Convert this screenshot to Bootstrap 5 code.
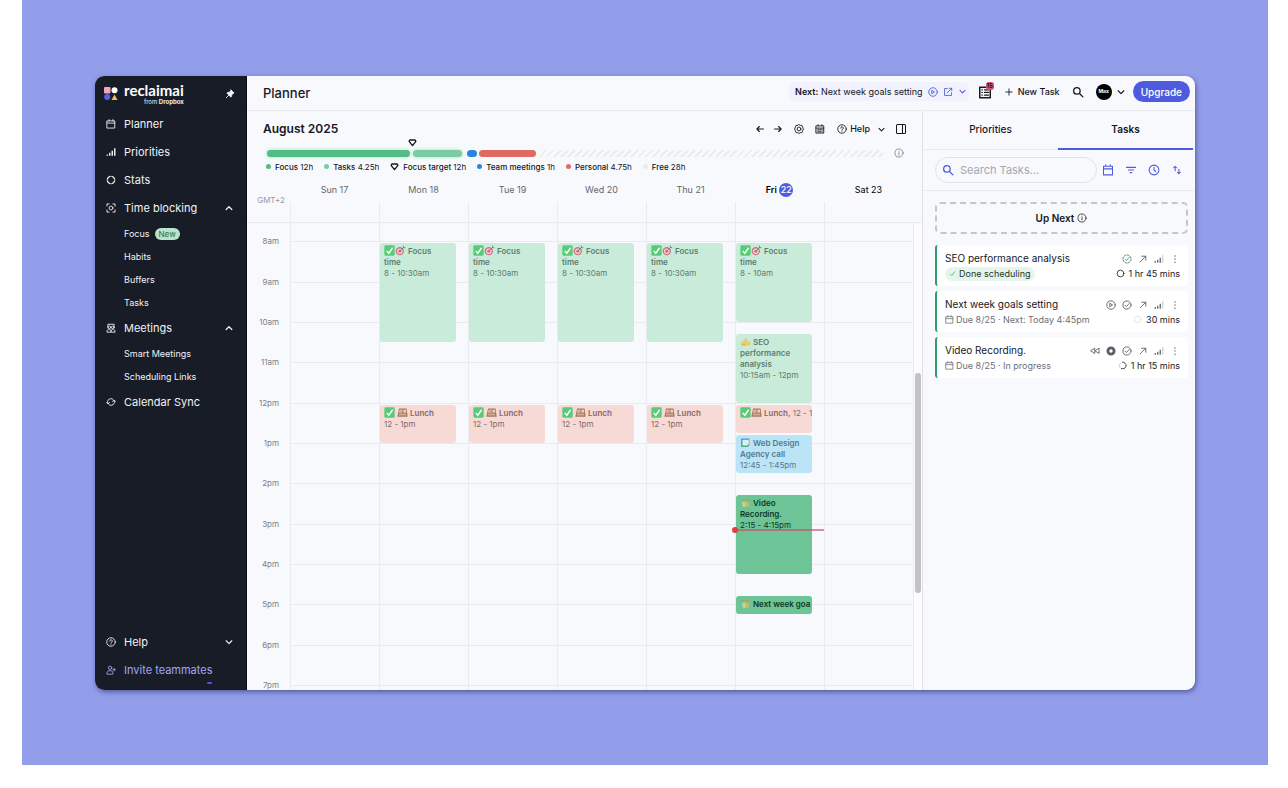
<!DOCTYPE html>
<html lang="en">
<head>
<meta charset="utf-8">
<meta name="viewport" content="width=device-width, initial-scale=1">
<title>Planner</title>
<link href="https://cdn.jsdelivr.net/npm/bootstrap@5.3.0/dist/css/bootstrap.min.css" rel="stylesheet">
<style>
:root{--ink:#15181f;--line:#e9ebf0;--accent:#4f5bde;--surface:#f8f9fd}
body{font-family:Inter,"Open Sans",sans-serif;font-size:11px;line-height:16px;color:var(--ink);background:#fff;padding:0 20px 23px 22px}
button,input{font:inherit;color:inherit}
button{background:none;border:0;padding:0}
a{color:inherit;text-decoration:none}
svg{display:block;flex:none}
.ico{width:12px;height:12px;fill:none;stroke:currentColor;stroke-width:1.4;stroke-linecap:round;stroke-linejoin:round}
.ico.xs{width:9px;height:9px}
.ico.sm{width:10px;height:10px}
.ico.lg{width:14px;height:14px}
.stage{background:#939eeb;min-height:calc(100vh - 23px);padding:76px 73px 75px}
.window{border-radius:9px;overflow:hidden;background:var(--surface);box-shadow:1px 2px 5px rgba(30,35,90,.55)}
/* sidebar */
.side{width:152px;background:#171c26;color:#f1f2f5;flex:none;padding-bottom:6px;border-right:1px solid #0b0e14}
.side-brand{height:34px;padding:2px 11px 0 9px;gap:6px}
.brand-name{font-family:Lato,sans-serif;font-weight:700;font-size:15px;line-height:15px;color:#fff}
.brand-sub{font-size:6px;line-height:7px;text-align:right}
.side-link{height:28px;padding:0 12px 0 11px;gap:8px;width:100%;text-align:left}
.side-link .ico:last-child:not(:first-child){margin-left:auto}
.side-sub{height:23px;padding-left:29px;font-size:9px;gap:5px}
.new-pill{background:#b9e3cd;color:#2d6b4d;border-radius:7px;font-size:8px;line-height:12px;padding:0 4px}
.invite{color:#a5a4f3;position:relative}
.invite::after{content:"";position:absolute;left:112px;bottom:0;width:5px;height:2px;border-radius:2px;background:#4f55d8}
/* top bar */
.topbar{height:35px;border-bottom:1px solid var(--line);padding:0 5px 3px 16px}
.top-tools{gap:12px}
.page-name{font-size:13px;font-weight:500;margin:0;line-height:18px;padding-top:2px}
.next-pill{background:#f1f2fd;border-radius:5px;height:19px;padding:0 2px 0 6px;margin-right:-3px;font-size:9px;gap:5px}
.text-9{font-size:9px}
.accent{color:var(--accent)}
.inbox{position:relative}
.inbox span{position:absolute;left:8px;top:-3px;min-width:8px;height:8px;background:#d9506a;border-radius:3px;font-size:6px;line-height:8px;font-weight:700;text-align:center}
.avatar{width:16px;height:16px;border-radius:50%;background:#000;color:#fff;font-size:5px;line-height:14px;font-weight:700;text-align:center}
.account{gap:3px}
.upgrade{background:var(--accent);color:#fff;border-radius:11px;height:21px;padding:0 8px;font-size:10px;font-weight:500}
/* planner */
.planner{border-right:1px solid #dfe1e7;min-width:0}
.month-row{height:36px;padding:0 15px 0 16px}
.month{font-size:12px;font-weight:600;margin:0}
.month-tools{gap:11px}
.help-menu{gap:3px;margin:0 -2px 0 1px}
.usage{padding:0 18px 0 20px;height:12px;gap:11px}
.usage-bar{position:relative;height:7px;min-width:0}
.seg{height:7px;border-radius:4px}
.glow{box-shadow:0 0 3px 1px #b9f0d2}
.hatch{background:repeating-linear-gradient(135deg,#eaecf0 0 2px,#f8f9fd 2px 5px)}
.marker{position:absolute;left:141px;top:-12px}
.legend{height:17px;padding:0 0 2px 19px;gap:11px;font-size:8px}
.legend b{font-weight:500}
.dot{width:5px;height:5px;border-radius:50%;flex:none}
.dot.free{background:#e9ebef}
.day-grid{display:grid;grid-template-columns:43px repeat(7,minmax(0,1fr)) 9px}
.day-head{height:47px;border-bottom:1px solid var(--line);font-size:9px;color:#63666e;text-align:center}
.day-head>div{padding-top:6px;position:relative}
.day-head>div+div::before{content:"";position:absolute;left:0;bottom:0;height:20px;border-left:1px solid var(--line)}
.day-head .tz{color:#989ba3;padding:16px 0 0 5px;font-size:8px}
.today{background:var(--accent);color:#fff;border-radius:50%;width:14px;height:14px;line-height:14px;display:inline-block;font-weight:500}
/* one grid row is two and a half minutes */
.hours{grid-template-rows:repeat(278,minmax(0,1fr));min-height:467px;flex:1;overflow:hidden;contain:size}
.day-line{grid-row:1/-1;border-left:1px solid var(--line)}
.hour-line{grid-column:2/9;height:0;border-top:1px solid var(--line)}
.hour{grid-column:1;font-size:8px;line-height:8px;color:#7b7e86;text-align:right;padding-right:11px;margin-top:-4px;height:8px}
.event{margin:2px 12px 0 1px;border-radius:3px;padding:2px 6px 0 4px;font-size:8px;line-height:11px;overflow:hidden;min-width:0;color:#5f7d6f;z-index:1}
.event b{font-weight:600}
.event svg{display:inline-block;vertical-align:-2px;width:11px;height:11px}
.ev-focus{background:#c9ebda}
.ev-lunch{background:#f7d9d6;color:#866a69}
.ev-call{background:#bbe4f7;color:#54798c}
.ev-task{background:#6cc497;color:#0d3823}
.now{grid-column:7;height:2px;background:rgba(205,80,100,.65);z-index:2;position:relative}
.now::before{content:"";position:absolute;left:-3px;top:-2px;width:6px;height:6px;border-radius:50%;background:#dc4040}
.track{grid-column:9;grid-row:1/-1;border-left:1px solid var(--line);background:#fcfcfe}
.thumb{grid-column:9;grid-row:90/221;background:#c2c2c4;border-radius:3px;margin:0 1px 0 2px}
/* task panel */
.panel{width:272px;flex:none}
.tab-row{height:39px;border-bottom:1px solid var(--line);padding-right:2px;font-size:10px;font-weight:500}
.tab-row button{flex:1;padding-bottom:2px}
.tab-row .on{border-bottom:2px solid var(--accent);font-weight:600;margin-bottom:-1px}
.search-row{height:41px;border-bottom:1px solid var(--line);padding:0 12px;gap:11px}
.search-box{border:1px solid #dfe2e8;border-radius:13px;height:26px;padding:0 6px;gap:6px;flex:1;min-width:0;margin-right:-6px}
.search-box input{border:0;background:none;outline:0;min-width:0;width:100%;padding:0}
.search-box input::placeholder{color:#a3a7b0;opacity:1}
.list-area{padding:11px 7px 0 12px}
.up-next{border:2px dashed #c4c6cc;border-radius:5px;height:32px;font-size:10px;font-weight:600;margin-bottom:11px;gap:3px}
.task{background:#fff;border-left:2px solid #2f9e6a;border-radius:3px;height:41px;padding:6px 8px 0;margin-bottom:5px;font-size:10px;line-height:15px}
.task small{font-size:9px;color:#6d7078;gap:2px}
.task .meta{font-size:9px}
.task .tools{gap:6px;color:#5b5e66}
.done{background:#e5f5ec;border-radius:7px;padding:0 5px 0 3px;gap:2px;font-size:9px;line-height:14px;color:#23352c}
</style>
</head>
<body>
<svg width="0" height="0" class="position-absolute" aria-hidden="true">
<defs>
<symbol id="cal" viewBox="0 0 16 16"><path d="M2 3h12v11.500H2zM2 6.500h12M5 1v2M11 1v2"/></symbol>
<symbol id="calf" viewBox="0 0 16 16"><path d="M2 3h12v11.500H2zM2 6.500h12M5 1v2M11 1v2"/><path d="M2.500 7h11v7h-11z" fill="currentColor" fill-opacity=".35" stroke="none"/><path d="M5 9h1M8 9h1M11 9h.5M5 12h1M8 12h1" stroke-width="1"/></symbol>
<symbol id="bars" viewBox="0 0 16 16"><path d="M2 14v-2M6 14V9M10 14V6M14 14V2" stroke-width="2.300" stroke-linecap="butt"/></symbol>
<symbol id="bars-off" viewBox="0 0 16 16"><path d="M2 14v-3M6 14V9M10 14V6" stroke-width="2" stroke-linecap="butt"/><path d="M14 14V2" stroke-width="2" stroke-opacity=".3" stroke-linecap="butt"/></symbol>
<symbol id="ring" viewBox="0 0 16 16"><path d="M9.500 2.200a6 6 0 0 1 4.300 4.300M13.800 9.500a6 6 0 0 1-4.300 4.300M6.500 13.800a6 6 0 0 1-4.300-4.300M2.200 6.500a6 6 0 0 1 4.300-4.300" stroke-width="2.300"/></symbol>
<symbol id="focus" viewBox="0 0 16 16"><path d="M1.500 5V1.500H5M11 1.500h3.500V5M14.500 11v3.500H11M5 14.500H1.500V11"/><circle cx="8" cy="8" r="3"/></symbol>
<symbol id="people" viewBox="0 0 16 16"><path d="M3 8V2h10v6M1.500 14c0-3 2-4 3.500-4s3 1 3 4c0-3 1.500-4 3-4s3.500 1 3.500 4z"/><circle cx="5.500" cy="7" r="2"/><circle cx="10.500" cy="7" r="2"/></symbol>
<symbol id="sync" viewBox="0 0 16 16"><path d="M3 10.500A5.500 5.500 0 0 1 11 3.500M13 5.500a5.500 5.500 0 0 1-8 7M1 8.500l2 2.500 2.500-2M15 7.500L13 5l-2.500 2"/></symbol>
<symbol id="help" viewBox="0 0 16 16"><circle cx="8" cy="8" r="6.800"/><path d="M6 6.500a2 2 0 1 1 3 1.700c-.7.400-1 .7-1 1.300M8 11.500v.200"/></symbol>
<symbol id="invite" viewBox="0 0 16 16"><circle cx="6.500" cy="4.500" r="2.700"/><path d="M1.500 14v-1.500c0-2 2-3.500 5-3.500s4.500 1.500 4.500 3.500V14zM13 5.500v4M11 7.500h4"/></symbol>
<symbol id="up" viewBox="0 0 16 16"><path d="M3.500 10.500L8 6l4.500 4.500" stroke-width="2"/></symbol>
<symbol id="down" viewBox="0 0 16 16"><path d="M3.500 6L8 10.500 12.500 6" stroke-width="1.800"/></symbol>
<symbol id="pin" viewBox="0 0 16 16"><path d="M9.500 1.500l5 5-1.500.5-2.500 2.500c.5 1.500 0 2.500-1 3.500L3 6.500c1-1 2-1.500 3.500-1L9 3zM6 10l-4 4" fill="currentColor"/></symbol>
<symbol id="play" viewBox="0 0 16 16"><circle cx="8" cy="8" r="6.800"/><path d="M6.500 5.500l4 2.500-4 2.500z"/></symbol>
<symbol id="open" viewBox="0 0 16 16"><path d="M7 2.500H2.500v11h11V9M10 2h4v4M14 2L7 9"/></symbol>
<symbol id="list" viewBox="0 0 16 16"><path d="M2 2.500h12v12H2z" stroke-width="1.700"/><path d="M4.500 5.500h.500M7.500 5.500H12M4.500 8.500h.500M7.500 8.500H12M4.500 11.500h.500M7.500 11.500H12"/></symbol>
<symbol id="plus" viewBox="0 0 16 16"><path d="M8 3v10M3 8h10"/></symbol>
<symbol id="search" viewBox="0 0 16 16"><circle cx="6.500" cy="6.500" r="4.300" stroke-width="1.700"/><path d="M10 10l4.500 4.500" stroke-width="1.700"/></symbol>
<symbol id="left" viewBox="0 0 16 16"><path d="M13.500 8H3M7 4L3 8l4 4" stroke-width="1.700"/></symbol>
<symbol id="right" viewBox="0 0 16 16"><path d="M2.500 8H13M9 4l4 4-4 4" stroke-width="1.700"/></symbol>
<symbol id="gear" viewBox="0 0 16 16"><path d="M8 1l2.200 1.200h2.500l1 2.600L15 8l-1.300 3.200-1 2.600h-2.500L8 15l-2.200-1.200H3.300l-1-2.600L1 8l1.300-3.200 1-2.600h2.500z"/><circle cx="8" cy="8" r="3"/></symbol>
<symbol id="split" viewBox="0 0 16 16"><rect x="2" y="2" width="12" height="12" rx="1.500"/><path d="M10 2v12"/></symbol>
<symbol id="info" viewBox="0 0 16 16"><circle cx="8" cy="8" r="6.500" stroke-width="1.200"/><path d="M8 7.500v3.500M8 5v.1" stroke-width="1.300"/></symbol>
<symbol id="filter" viewBox="0 0 16 16"><path d="M2 4.500h12M4.500 8h7M7 11.500h2"/></symbol>
<symbol id="clock" viewBox="0 0 16 16"><circle cx="8" cy="8" r="6.500"/><path d="M8 4v4l2.500 2"/></symbol>
<symbol id="sort" viewBox="0 0 16 16"><path d="M5.500 9V3M3.500 5l2-2 2 2M10.500 7v6M8.500 11l2 2 2-2"/></symbol>
<symbol id="check" viewBox="0 0 16 16"><circle cx="8" cy="8" r="6.500"/><path d="M5 8.500l2 2 4.500-5"/></symbol>
<symbol id="check-dash" viewBox="0 0 16 16"><circle cx="8" cy="8" r="6.500" stroke-dasharray="3 2"/><path d="M5 8.500l2 2 4.500-5"/></symbol>
<symbol id="tick" viewBox="0 0 16 16"><path d="M4 9l2.500 2.500L12 5" stroke="#5e9c7c"/></symbol>
<symbol id="ne" viewBox="0 0 16 16"><path d="M3.500 12.500l9-9M6 3.500h6.500V10"/></symbol>
<symbol id="dots" viewBox="0 0 16 16"><path d="M8 3v.1M8 8v.1M8 13v.1" stroke-width="2.200"/></symbol>
<symbol id="rew" viewBox="0 0 16 16"><path d="M7.500 4v8l-6-4zM14.500 4v8l-6-4z"/></symbol>
<symbol id="stop" viewBox="0 0 16 16"><circle cx="8" cy="8" r="5" stroke-width="4.500"/></symbol>
<symbol id="circ" viewBox="0 0 16 16"><circle cx="8" cy="8" r="6"/></symbol>
<symbol id="arc" viewBox="0 0 16 16"><path d="M8 2a6 6 0 1 1-2 11.500"/><path d="M3.500 12A6 6 0 0 1 5 3" stroke-opacity=".25"/></symbol>
<symbol id="tri" viewBox="0 0 16 16"><path d="M3.500 3.500h9L14 6l-6 7.500L2 6z" stroke-width="2.400"/></symbol>
<symbol id="e-check" viewBox="0 0 16 16"><rect x=".5" y=".5" width="15" height="15" rx="2" fill="#57cb78"/><path d="M4 8.500l3 3.500 5.500-8" fill="none" stroke="#fff" stroke-width="2"/></symbol>
<symbol id="e-target" viewBox="0 0 16 16"><circle cx="7" cy="9" r="6" fill="#cf7280"/><circle cx="7" cy="9" r="4" fill="#f3dfe0"/><circle cx="7" cy="9" r="2.300" fill="#cf7280"/><path d="M7 9l6-6M12 1l.5 2.500L15 4" stroke="#64808a" stroke-width="1.300" fill="none"/></symbol>
<symbol id="e-bento" viewBox="0 0 16 16"><path d="M3 2h11l1.500 12H.5z" fill="#a37965"/><path d="M4 4h4v4H3zM9.500 4H13l.5 4h-4z" fill="#f0d4bb"/><path d="M3 9.500h10l.5 3h-11z" fill="#d7a58d"/><circle cx="6" cy="6" r="1" fill="#d75a50"/></symbol>
<symbol id="e-hand" viewBox="0 0 16 16"><path d="M2 8l4-1 2-4 2 1v3l5 1v5l-4 1-9-1z" fill="#ebca68"/><path d="M2 13h6" stroke="#c2a34c"/></symbol>
<symbol id="e-meet" viewBox="0 0 16 16"><path d="M2 4h12v8l-3 2H2z" fill="#d6effa"/><path d="M2.500 14V3" stroke="#4298d5" stroke-width="2"/><path d="M2 3h12" stroke="#4a93dd" stroke-width="2"/><path d="M13.500 3v8" stroke="#e4b74f" stroke-width="2"/><path d="M2 13.500h9l2.500-2.500" stroke="#50ae79" stroke-width="2" fill="none"/></symbol>
<symbol id="e-box" viewBox="0 0 16 16"><path d="M3 7l6-1 4 2v6H4z" fill="#c7ba68"/><path d="M3 7l5 1v6H4z" fill="#a8e09c"/><path d="M9 5l4-2M4 5l2-2" stroke="#d98b4e" stroke-width="2"/></symbol>
</defs>
</svg>

<div class="stage d-flex">
<div class="window d-flex flex-fill">

<nav class="side d-flex flex-column" aria-label="Main">
  <div class="side-brand d-flex align-items-center">
    <svg width="14" height="14" viewBox="0 0 14 14"><rect width="6.500" height="6.500" x="0" y="0" rx="1" fill="#f4a6b8"/><circle cx="10.500" cy="3.300" r="3" fill="#fff"/><circle cx="3.200" cy="10" r="3" fill="#5a5fe8"/><path d="M10.500 7.500l3 5.500h-6z" fill="#f5bd5a"/></svg>
    <div><div class="brand-name">reclaimai</div><div class="brand-sub">from <b>Dropbox</b></div></div>
    <button class="ms-auto" aria-label="Pin sidebar"><svg class="ico sm"><use href="#pin"/></svg></button>
  </div>
  <a href="#" class="side-link d-flex align-items-center"><svg class="ico sm"><use href="#cal"/></svg>Planner</a>
  <a href="#" class="side-link d-flex align-items-center"><svg class="ico sm"><use href="#bars"/></svg>Priorities</a>
  <a href="#" class="side-link d-flex align-items-center"><svg class="ico sm"><use href="#ring"/></svg>Stats</a>
  <button class="side-link d-flex align-items-center"><svg class="ico sm"><use href="#focus"/></svg>Time blocking<svg class="ico sm"><use href="#up"/></svg></button>
  <a href="#" class="side-sub d-flex align-items-center">Focus <span class="new-pill">New</span></a>
  <a href="#" class="side-sub d-flex align-items-center">Habits</a>
  <a href="#" class="side-sub d-flex align-items-center">Buffers</a>
  <a href="#" class="side-sub d-flex align-items-center">Tasks</a>
  <button class="side-link d-flex align-items-center"><svg class="ico sm"><use href="#people"/></svg>Meetings<svg class="ico sm"><use href="#up"/></svg></button>
  <a href="#" class="side-sub d-flex align-items-center">Smart Meetings</a>
  <a href="#" class="side-sub d-flex align-items-center">Scheduling Links</a>
  <a href="#" class="side-link d-flex align-items-center"><svg class="ico sm"><use href="#sync"/></svg>Calendar Sync</a>
  <button class="side-link d-flex align-items-center mt-auto"><svg class="ico sm"><use href="#help"/></svg>Help<svg class="ico sm"><use href="#down"/></svg></button>
  <a href="#" class="side-link invite d-flex align-items-center"><svg class="ico sm"><use href="#invite"/></svg>Invite teammates</a>
</nav>

<div class="d-flex flex-column flex-fill" style="min-width:0">
  <header class="topbar d-flex align-items-center justify-content-between">
    <h1 class="page-name">Planner</h1>
    <div class="top-tools d-flex align-items-center">
      <div class="next-pill d-flex align-items-center">
        <span><b class="fw-semibold">Next:</b> Next week goals setting</span>
        <button class="accent" aria-label="Start"><svg class="ico sm"><use href="#play"/></svg></button>
        <button class="accent" aria-label="Open"><svg class="ico sm"><use href="#open"/></svg></button>
        <button class="accent" aria-label="More"><svg class="ico xs"><use href="#down"/></svg></button>
      </div>
      <button class="inbox" aria-label="Inbox"><svg class="ico lg"><use href="#list"/></svg><span>15</span></button>
      <button class="text-9 fw-medium d-flex align-items-center gap-1"><svg class="ico sm"><use href="#plus"/></svg>New Task</button>
      <button aria-label="Search"><svg class="ico"><use href="#search"/></svg></button>
      <div class="account d-flex align-items-center">
        <button class="d-flex align-items-center gap-1 me-1" aria-label="Account"><span class="avatar">Max</span><svg class="ico sm"><use href="#down"/></svg></button>
        <button class="upgrade">Upgrade</button>
      </div>
    </div>
  </header>

  <div class="d-flex flex-fill">
    <main class="planner d-flex flex-column flex-fill">
      <div class="month-row d-flex align-items-center justify-content-between">
        <h2 class="month">August 2025</h2>
        <div class="month-tools d-flex align-items-center">
          <div class="d-flex gap-2">
            <button aria-label="Previous week"><svg class="ico sm"><use href="#left"/></svg></button>
            <button aria-label="Next week"><svg class="ico sm"><use href="#right"/></svg></button>
          </div>
          <button aria-label="Settings"><svg class="ico sm"><use href="#gear"/></svg></button>
          <button aria-label="Calendar"><svg class="ico sm"><use href="#calf"/></svg></button>
          <button class="help-menu d-flex align-items-center text-9 fw-medium"><svg class="ico sm"><use href="#help"/></svg>Help<svg class="ico xs ms-1"><use href="#down"/></svg></button>
          <button aria-label="Toggle panel"><svg class="ico"><use href="#split"/></svg></button>
        </div>
      </div>
      <div class="usage d-flex align-items-center">
        <div class="usage-bar d-flex flex-fill">
          <div class="seg glow" style="flex:143;background:#55bb87;margin-right:3px"></div>
          <div class="seg glow" style="flex:49;background:#7ccba3;margin-right:5px"></div>
          <div class="seg" style="flex:10;background:#2a86dc;margin-right:2px"></div>
          <div class="seg" style="flex:57;background:#df6a63;margin-right:2px"></div>
          <div class="seg hatch" style="flex:346"></div>
          <svg class="ico xs marker"><use href="#tri"/></svg>
        </div>
        <button class="text-secondary" aria-label="About usage"><svg class="ico sm"><use href="#info"/></svg></button>
      </div>
      <div class="legend d-flex align-items-center">
        <span class="d-flex align-items-center"><i class="dot me-1" style="background:#55bb87"></i><span><b>Focus</b> 12h</span></span>
        <span class="d-flex align-items-center"><i class="dot me-1" style="background:#7ccba3"></i><span><b>Tasks</b> 4.25h</span></span>
        <span class="d-flex align-items-center"><svg class="ico xs me-1"><use href="#tri"/></svg><span><b>Focus target</b> 12h</span></span>
        <span class="d-flex align-items-center"><i class="dot me-1" style="background:#2a86dc"></i><span><b>Team meetings</b> 1h</span></span>
        <span class="d-flex align-items-center"><i class="dot me-1" style="background:#df6a63"></i><span><b>Personal</b> 4.75h</span></span>
        <span class="d-flex align-items-center"><i class="dot free me-1"></i><span><b>Free</b> 28h</span></span>
      </div>
      <div class="day-grid day-head">
        <div class="tz">GMT+2</div><div>Sun 17</div><div>Mon 18</div><div>Tue 19</div><div>Wed 20</div><div>Thu 21</div>
        <div class="text-black"><b class="fw-semibold">Fri</b> <span class="today">22</span></div><div class="text-black">Sat 23</div>
      </div>
      <div class="day-grid hours">
        <div class="day-line" style="grid-column:2"></div><div class="day-line" style="grid-column:3"></div><div class="day-line" style="grid-column:4"></div><div class="day-line" style="grid-column:5"></div><div class="day-line" style="grid-column:6"></div><div class="day-line" style="grid-column:7"></div><div class="day-line" style="grid-column:8"></div>
        <div class="hour" style="grid-row:12">8am</div><div class="hour-line" style="grid-row:12"></div>
        <div class="hour" style="grid-row:36">9am</div><div class="hour-line" style="grid-row:36"></div>
        <div class="hour" style="grid-row:60">10am</div><div class="hour-line" style="grid-row:60"></div>
        <div class="hour" style="grid-row:84">11am</div><div class="hour-line" style="grid-row:84"></div>
        <div class="hour" style="grid-row:108">12pm</div><div class="hour-line" style="grid-row:108"></div>
        <div class="hour" style="grid-row:132">1pm</div><div class="hour-line" style="grid-row:132"></div>
        <div class="hour" style="grid-row:156">2pm</div><div class="hour-line" style="grid-row:156"></div>
        <div class="hour" style="grid-row:180">3pm</div><div class="hour-line" style="grid-row:180"></div>
        <div class="hour" style="grid-row:204">4pm</div><div class="hour-line" style="grid-row:204"></div>
        <div class="hour" style="grid-row:228">5pm</div><div class="hour-line" style="grid-row:228"></div>
        <div class="hour" style="grid-row:252">6pm</div><div class="hour-line" style="grid-row:252"></div>
        <div class="hour" style="grid-row:276">7pm</div><div class="hour-line" style="grid-row:276"></div>

        <div class="event ev-focus" style="grid-area:12/3/72/4"><b><svg><use href="#e-check"/></svg><svg><use href="#e-target"/></svg> Focus time</b><br>8 - 10:30am</div>
        <div class="event ev-focus" style="grid-area:12/4/72/5"><b><svg><use href="#e-check"/></svg><svg><use href="#e-target"/></svg> Focus time</b><br>8 - 10:30am</div>
        <div class="event ev-focus" style="grid-area:12/5/72/6"><b><svg><use href="#e-check"/></svg><svg><use href="#e-target"/></svg> Focus time</b><br>8 - 10:30am</div>
        <div class="event ev-focus" style="grid-area:12/6/72/7"><b><svg><use href="#e-check"/></svg><svg><use href="#e-target"/></svg> Focus time</b><br>8 - 10:30am</div>
        <div class="event ev-focus" style="grid-area:12/7/60/8"><b><svg><use href="#e-check"/></svg><svg><use href="#e-target"/></svg> Focus time</b><br>8 - 10am</div>
        <div class="event ev-focus" style="grid-area:66/7/108/8"><b><svg><use href="#e-hand"/></svg> SEO performance analysis</b><br>10:15am - 12pm</div>
        <div class="event ev-lunch" style="grid-area:108/3/132/4"><b><svg><use href="#e-check"/></svg> <svg><use href="#e-bento"/></svg> Lunch</b><br>12 - 1pm</div>
        <div class="event ev-lunch" style="grid-area:108/4/132/5"><b><svg><use href="#e-check"/></svg> <svg><use href="#e-bento"/></svg> Lunch</b><br>12 - 1pm</div>
        <div class="event ev-lunch" style="grid-area:108/5/132/6"><b><svg><use href="#e-check"/></svg> <svg><use href="#e-bento"/></svg> Lunch</b><br>12 - 1pm</div>
        <div class="event ev-lunch" style="grid-area:108/6/132/7"><b><svg><use href="#e-check"/></svg> <svg><use href="#e-bento"/></svg> Lunch</b><br>12 - 1pm</div>
        <div class="event ev-lunch text-nowrap" style="grid-area:108/7/126/8"><b><svg><use href="#e-check"/></svg><svg><use href="#e-bento"/></svg> Lunch,</b> 12 - 1</div>
        <div class="event ev-call" style="grid-area:126/7/150/8"><b><svg><use href="#e-meet"/></svg> Web Design Agency call</b><br>12:45 - 1:45pm</div>
        <div class="event ev-task" style="grid-area:162/7/210/8"><b><svg><use href="#e-box"/></svg> Video Recording.</b><br>2:15 - 4:15pm</div>
        <div class="event ev-task text-nowrap" style="grid-area:222/7/234/8"><b><svg><use href="#e-box"/></svg> Next week goa</b></div>
        <div class="now" style="grid-row:183"></div>
        <div class="track"></div><div class="thumb"></div>
      </div>
    </main>

    <aside class="panel">
      <div class="tab-row d-flex" role="tablist">
        <button role="tab" aria-selected="false">Priorities</button>
        <button role="tab" aria-selected="true" class="on">Tasks</button>
      </div>
      <div class="search-row d-flex align-items-center accent">
        <label class="search-box d-flex align-items-center"><svg class="ico"><use href="#search"/></svg><input type="text" placeholder="Search Tasks..." aria-label="Search tasks"></label>
        <button aria-label="Due date"><svg class="ico"><use href="#cal"/></svg></button>
        <button aria-label="Filter"><svg class="ico"><use href="#filter"/></svg></button>
        <button aria-label="Duration"><svg class="ico"><use href="#clock"/></svg></button>
        <button aria-label="Sort"><svg class="ico"><use href="#sort"/></svg></button>
      </div>
      <div class="list-area">
        <div class="up-next d-flex align-items-center justify-content-center">Up Next <svg class="ico sm"><use href="#info"/></svg></div>
        <article class="task">
          <div class="d-flex align-items-center justify-content-between">SEO performance analysis
            <div class="tools d-flex"><svg class="ico sm" style="color:#4c8a6b"><use href="#check-dash"/></svg><svg class="ico sm"><use href="#ne"/></svg><svg class="ico sm"><use href="#bars-off"/></svg><svg class="ico sm"><use href="#dots"/></svg></div></div>
          <div class="d-flex align-items-center justify-content-between"><span class="done d-flex align-items-center"><svg class="ico xs"><use href="#tick"/></svg>Done scheduling</span>
            <span class="meta d-flex align-items-center gap-1"><svg class="ico xs"><use href="#circ"/></svg>1 hr 45 mins</span></div>
        </article>
        <article class="task">
          <div class="d-flex align-items-center justify-content-between">Next week goals setting
            <div class="tools d-flex"><svg class="ico sm"><use href="#play"/></svg><svg class="ico sm"><use href="#check"/></svg><svg class="ico sm"><use href="#ne"/></svg><svg class="ico sm"><use href="#bars-off"/></svg><svg class="ico sm"><use href="#dots"/></svg></div></div>
          <div class="d-flex align-items-center justify-content-between"><small class="d-flex align-items-center"><svg class="ico xs"><use href="#cal"/></svg>Due 8/25 · Next: Today 4:45pm</small>
            <span class="meta d-flex align-items-center gap-1"><svg class="ico xs" style="color:#dcdee3"><use href="#circ"/></svg>30 mins</span></div>
        </article>
        <article class="task">
          <div class="d-flex align-items-center justify-content-between">Video Recording.
            <div class="tools d-flex"><svg class="ico sm"><use href="#rew"/></svg><svg class="ico sm"><use href="#stop"/></svg><svg class="ico sm"><use href="#check"/></svg><svg class="ico sm"><use href="#ne"/></svg><svg class="ico sm"><use href="#bars-off"/></svg><svg class="ico sm"><use href="#dots"/></svg></div></div>
          <div class="d-flex align-items-center justify-content-between"><small class="d-flex align-items-center"><svg class="ico xs"><use href="#cal"/></svg>Due 8/25 · In progress</small>
            <span class="meta d-flex align-items-center gap-1"><svg class="ico xs"><use href="#arc"/></svg>1 hr 15 mins</span></div>
        </article>
      </div>
    </aside>
  </div>
</div>
</div>
</div>
<script src="https://cdn.jsdelivr.net/npm/bootstrap@5.3.0/dist/js/bootstrap.bundle.min.js"></script>
</body>
</html>
